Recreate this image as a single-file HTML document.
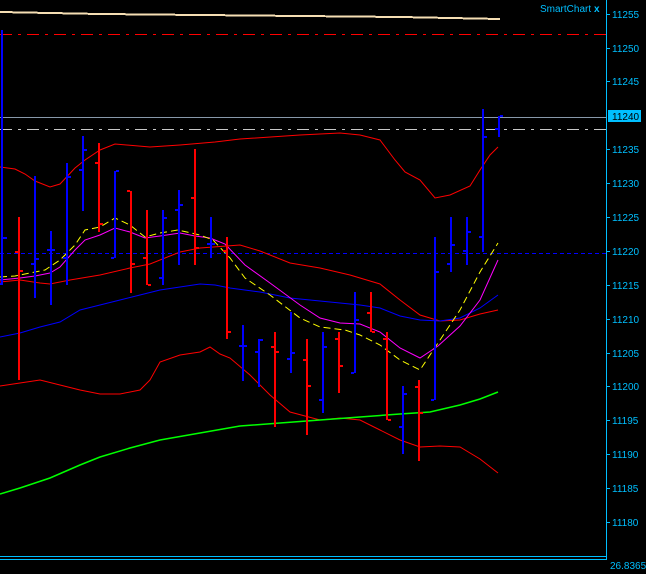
<!DOCTYPE html><html><head><style>body{margin:0;background:#000;width:646px;height:574px;overflow:hidden}svg{display:block}text{font-family:"Liberation Sans",sans-serif;font-size:10px;fill:#00bfff}</style></head><body>
<svg width="646" height="574" viewBox="0 0 646 574" xmlns="http://www.w3.org/2000/svg" shape-rendering="crispEdges">
<rect width="646" height="574" fill="#000"/>
<polyline points="0,12 100,14 200,15 300,16 400,17 500,19" fill="none" stroke="#f5deb3" stroke-width="2"/>
<line x1="0" y1="34.5" x2="606" y2="34.5" stroke="#ff0000" stroke-dasharray="12,6,3,6"/>
<line x1="0" y1="117.5" x2="606" y2="117.5" stroke="#8899aa"/>
<line x1="0" y1="129.5" x2="606" y2="129.5" stroke="#c8c8c8" stroke-dasharray="12,6,3,6"/>
<line x1="0" y1="253.5" x2="606" y2="253.5" stroke="#0000ff" stroke-dasharray="4,3"/>
<g fill="none" stroke-width="1" shape-rendering="auto">
<polyline stroke="#ff0000" points="0,167 15,169 25,174 35,181 50,187 60,184 75,168 85,160 100,150 115,144 150,147 180,145 215,142 240,139 300,135 340,133 360,135 380,140 395,160 405,172 420,180 435,198 450,195 470,186 480,170 490,155 498,147"/>
<polyline stroke="#ff0000" points="0,282 20,280 40,283 50,284 70,280 100,275 130,268 150,264 180,252 200,248 240,245 260,251 290,263 320,268 350,275 380,284 400,300 420,315 440,321 460,320 480,314 498,310"/>
<polyline stroke="#ff0000" points="0,386 20,383 40,380 60,385 80,390 100,394 120,394 140,390 150,380 160,362 180,355 200,352 210,347 220,354 230,358 250,375 270,395 290,412 320,420 340,418 360,420 380,430 400,440 420,447 440,446 460,447 480,459 498,473"/>
<polyline stroke="#0000ff" points="0,337 20,333 40,327 60,322 80,310 100,305 120,300 140,295 160,290 180,287 200,284 215,285 230,288 260,292 290,298 330,302 360,305 380,308 400,316 420,320 440,321 460,318 480,308 498,295"/>
<polyline stroke="#00ff00" stroke-width="1.5" points="0,494 20,488 50,478 80,465 100,457 130,448 160,440 200,433 240,426 280,423 320,420 360,417 400,414 430,412 460,405 480,399 498,392"/>
<polyline stroke="#ff00ff" points="0,280 20,278 35,276 50,273 60,267 75,250 85,240 100,235 115,228 130,232 145,238 160,236 180,233 195,236 210,238 225,244 245,265 270,283 300,305 320,318 340,323 360,324 380,332 400,348 420,358 438,346 460,326 480,300 498,260"/>
<polyline stroke="#ffff00" stroke-dasharray="7,4" points="0,277 15,276 30,273 45,270 60,260 75,245 85,230 100,227 115,218 130,225 145,237 160,233 178,230 200,235 213,240 230,258 245,278 270,295 300,318 320,327 345,330 360,335 380,345 400,360 420,370 440,340 460,310 480,272 498,243"/>
</g>
<g id="bars">
<!-- x, top, bottom, left tick, right tick, color -->
<g fill="#0000ff">
<rect x="1" y="30" width="2" height="255"/><rect x="3" y="237" width="4" height="2"/><rect x="-2" y="283" width="3" height="2"/>
<rect x="34" y="176" width="2" height="122"/><rect x="31" y="263" width="3" height="2"/><rect x="36" y="258" width="3" height="2"/>
<rect x="50" y="231" width="2" height="74"/><rect x="47" y="249" width="8" height="2"/>
<rect x="66" y="163" width="2" height="122"/><rect x="63" y="257" width="3" height="2"/><rect x="68" y="176" width="3" height="2"/>
<rect x="82" y="136" width="2" height="75"/><rect x="79" y="169" width="3" height="2"/><rect x="84" y="149" width="3" height="2"/>
<rect x="114" y="171" width="2" height="87"/><rect x="116" y="170" width="3" height="2"/><rect x="111" y="257" width="3" height="2"/>
<rect x="162" y="210" width="2" height="75"/><rect x="159" y="277" width="3" height="2"/><rect x="164" y="217" width="3" height="2"/>
<rect x="178" y="190" width="2" height="75"/><rect x="175" y="209" width="3" height="2"/><rect x="180" y="204" width="3" height="2"/>
<rect x="210" y="217" width="2" height="41"/><rect x="207" y="243" width="8" height="2"/>
<rect x="242" y="325" width="2" height="56"/><rect x="239" y="345" width="8" height="2"/>
<rect x="258" y="339" width="2" height="48"/><rect x="255" y="351" width="3" height="2"/><rect x="260" y="339" width="3" height="2"/>
<rect x="290" y="312" width="2" height="61"/><rect x="287" y="358" width="3" height="2"/><rect x="292" y="352" width="3" height="2"/>
<rect x="322" y="332" width="2" height="81"/><rect x="319" y="399" width="3" height="2"/><rect x="324" y="346" width="3" height="2"/>
<rect x="354" y="292" width="2" height="81"/><rect x="351" y="372" width="3" height="2"/><rect x="356" y="319" width="3" height="2"/>
<rect x="402" y="386" width="2" height="68"/><rect x="399" y="426" width="3" height="2"/><rect x="404" y="393" width="3" height="2"/>
<rect x="434" y="237" width="2" height="163"/><rect x="431" y="399" width="3" height="2"/><rect x="436" y="271" width="3" height="2"/>
<rect x="450" y="217" width="2" height="55"/><rect x="447" y="263" width="3" height="2"/><rect x="452" y="244" width="3" height="2"/>
<rect x="466" y="217" width="2" height="48"/><rect x="463" y="250" width="3" height="2"/><rect x="468" y="231" width="3" height="2"/>
<rect x="482" y="109" width="2" height="143"/><rect x="479" y="236" width="3" height="2"/><rect x="484" y="136" width="3" height="2"/>
<rect x="498" y="116" width="2" height="21"/><rect x="495" y="128" width="3" height="2"/><rect x="500" y="115" width="3" height="2"/>
</g>
<g fill="#ff0000">
<rect x="18" y="217" width="2" height="163"/><rect x="15" y="251" width="3" height="2"/><rect x="20" y="270" width="3" height="2"/>
<rect x="98" y="143" width="2" height="89"/><rect x="95" y="162" width="3" height="2"/><rect x="100" y="223" width="3" height="2"/>
<rect x="130" y="191" width="2" height="102"/><rect x="127" y="190" width="3" height="2"/><rect x="132" y="263" width="3" height="2"/>
<rect x="146" y="210" width="2" height="75"/><rect x="143" y="257" width="3" height="2"/><rect x="148" y="284" width="3" height="2"/>
<rect x="194" y="149" width="2" height="116"/><rect x="191" y="197" width="3" height="2"/><rect x="196" y="247" width="3" height="2"/>
<rect x="226" y="237" width="2" height="102"/><rect x="223" y="250" width="3" height="2"/><rect x="228" y="331" width="3" height="2"/>
<rect x="274" y="332" width="2" height="95"/><rect x="271" y="346" width="3" height="2"/><rect x="276" y="351" width="3" height="2"/>
<rect x="306" y="339" width="2" height="96"/><rect x="303" y="359" width="3" height="2"/><rect x="308" y="385" width="3" height="2"/>
<rect x="338" y="332" width="2" height="61"/><rect x="335" y="338" width="3" height="2"/><rect x="340" y="365" width="3" height="2"/>
<rect x="370" y="292" width="2" height="40"/><rect x="367" y="312" width="3" height="2"/><rect x="372" y="331" width="3" height="2"/>
<rect x="386" y="332" width="2" height="88"/><rect x="383" y="338" width="3" height="2"/><rect x="388" y="419" width="3" height="2"/>
<rect x="418" y="380" width="2" height="81"/><rect x="415" y="386" width="3" height="2"/><rect x="420" y="412" width="3" height="2"/>
</g>
</g>
<rect x="606" y="0" width="1" height="560" fill="#00bfff"/>
<rect x="0" y="556" width="607" height="1" fill="#00bfff"/>
<rect x="0" y="559" width="607" height="1" fill="#00bfff"/>
<g fill="#00bfff">
<rect x="607" y="14" width="3" height="1"/><rect x="607" y="48" width="3" height="1"/><rect x="607" y="81" width="3" height="1"/><rect x="607" y="149" width="3" height="1"/><rect x="607" y="183" width="3" height="1"/><rect x="607" y="217" width="3" height="1"/><rect x="607" y="251" width="3" height="1"/><rect x="607" y="285" width="3" height="1"/><rect x="607" y="319" width="3" height="1"/><rect x="607" y="353" width="3" height="1"/><rect x="607" y="386" width="3" height="1"/><rect x="607" y="420" width="3" height="1"/><rect x="607" y="454" width="3" height="1"/><rect x="607" y="488" width="3" height="1"/><rect x="607" y="522" width="3" height="1"/>
<rect x="608" y="110" width="33" height="12"/>
</g>
<g>
<text x="612" y="18">11255</text><text x="612" y="52">11250</text><text x="612" y="85">11245</text>
<text x="612" y="120" style="fill:#000">11240</text>
<text x="612" y="153">11235</text><text x="612" y="187">11230</text><text x="612" y="221">11225</text><text x="612" y="255">11220</text><text x="612" y="289">11215</text><text x="612" y="323">11210</text><text x="612" y="357">11205</text><text x="612" y="390">11200</text><text x="612" y="424">11195</text><text x="612" y="458">11190</text><text x="612" y="492">11185</text><text x="612" y="526">11180</text>
<text x="610" y="569">26.8365</text>
<text x="540" y="12">SmartChart</text><text x="594" y="12" style="font-weight:bold">x</text>
</g>
</svg>
</body></html>
